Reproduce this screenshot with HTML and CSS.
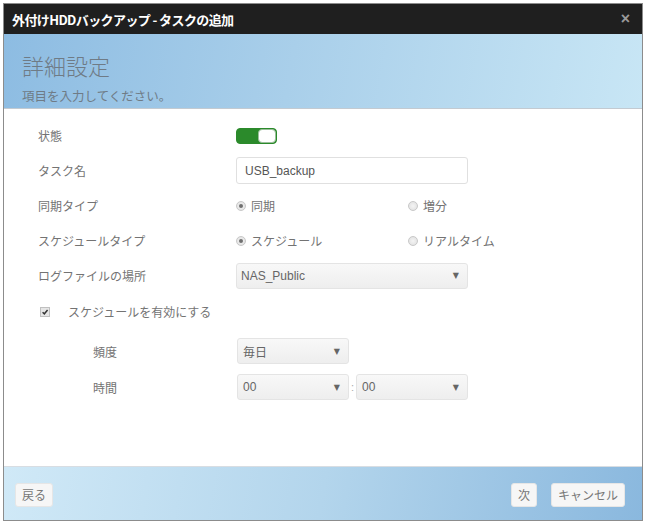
FILE: index.html
```html
<!DOCTYPE html>
<html lang="ja">
<head>
<meta charset="utf-8">
<title>外付けHDDバックアップ - タスクの追加</title>
<link rel="stylesheet" href="styles.css">
</head>
<body>
<div class="dialog">
  <div class="titlebar">
    <span class="title">外付けHDDバックアップ - タスクの追加</span>
    <span class="close">×</span>
  </div>
  <div class="banner">
    <div class="banner-title">詳細設定</div>
    <div class="banner-sub">項目を入力してください。</div>
  </div>
  <div class="content">
    <div class="row">
      <div class="label">状態</div>
      <div class="control"><span class="toggle"><span class="knob"></span></span></div>
    </div>
    <div class="row">
      <div class="label">タスク名</div>
      <div class="control"><div class="input">USB_backup</div></div>
    </div>
    <div class="row">
      <div class="label">同期タイプ</div>
      <div class="control radios">
        <span class="radio-opt"><span class="radio checked"></span>同期</span>
        <span class="radio-opt"><span class="radio"></span>増分</span>
      </div>
    </div>
    <div class="row">
      <div class="label">スケジュールタイプ</div>
      <div class="control radios">
        <span class="radio-opt"><span class="radio checked"></span>スケジュール</span>
        <span class="radio-opt"><span class="radio"></span>リアルタイム</span>
      </div>
    </div>
    <div class="row">
      <div class="label">ログファイルの場所</div>
      <div class="control"><div class="select wide"><span class="latin">NAS_Public</span><span class="arrow">▼</span></div></div>
    </div>
    <div class="row check-row">
      <span class="checkbox"><svg viewBox="0 0 10 10" width="10" height="10"><path d="M2 5.2 L4.2 7.3 L8.2 2.6" fill="none" stroke="#333" stroke-width="1.8"/></svg></span>
      <span class="check-label">スケジュールを有効にする</span>
    </div>
    <div class="sub">
      <div class="row sub-row">
        <div class="label sub-label">頻度</div>
        <div class="control"><div class="select short">毎日<span class="arrow">▼</span></div></div>
      </div>
      <div class="row sub-row">
        <div class="label sub-label">時間</div>
        <div class="control time">
          <div class="select short"><span class="latin">00</span><span class="arrow">▼</span></div>
          <span class="colon">:</span>
          <div class="select short"><span class="latin">00</span><span class="arrow">▼</span></div>
        </div>
      </div>
    </div>
  </div>
  <div class="footer">
    <span class="btn">戻る</span>
    <span class="spacer"></span>
    <span class="btn">次</span>
    <span class="btn">キャンセル</span>
  </div>
</div>
</body>
</html>
```
FILE: styles.css
```css
* { box-sizing: border-box; }
html, body { margin: 0; padding: 0; background: #ffffff; }
body {
  font-family: "Noto Sans CJK JP", "Liberation Sans", sans-serif;
  width: 645px;
  height: 527px;
  overflow: hidden;
}
.dialog {
  margin: 3px 0 0 3px;
  width: 640px;
  height: 518px;
  border: 1px solid #8c8c8c;
  display: flex;
  flex-direction: column;
  background: #fff;
}
.titlebar {
  height: 30px;
  background: #1f1f1f;
  display: flex;
  align-items: center;
  justify-content: space-between;
  padding: 0 12px 0 8px;
  flex: none;
}
.title {
  color: #fff;
  font-weight: 700;
  font-size: 13px;
  letter-spacing: -0.6px;
}
.close {
  color: #9a9a9a;
  font-family: "Liberation Sans", sans-serif;
  font-size: 16px;
  font-weight: 700;
}
.banner {
  height: 75px;
  flex: none;
  background: linear-gradient(100deg, #8dbce2 0%, #a9cfea 45%, #c8e6f5 100%);
  border-bottom: 1px solid #c3cad1;
  padding: 17px 0 0 18px;
}
.banner-title {
  font-size: 22px;
  line-height: 28px;
  color: #6f7b86;
  font-weight: 300;
}
.banner-sub {
  margin-top: 9px;
  font-size: 12.5px;
  line-height: 16px;
  color: #6f7b86;
}
.content {
  flex: 1;
  padding: 9px 0 0 34px;
}
.row {
  display: flex;
  align-items: center;
  height: 35px;
}
.label {
  width: 198px;
  font-size: 12px;
  color: #737373;
  flex: none;
}
.control {
  display: flex;
  align-items: center;
}
.toggle {
  width: 41px;
  height: 16px;
  border-radius: 4px;
  background: #2b8a2b;
  border: 1px solid #2b8a2b;
  display: flex;
  justify-content: flex-end;
}
.knob {
  width: 18px;
  height: 14px;
  background: #fff;
  border-radius: 4px;
  border: 1px solid #9bbf9b;
}
.input {
  width: 232px;
  height: 27px;
  border: 1px solid #e0e0e0;
  border-radius: 3px;
  padding-left: 8px;
  display: flex;
  align-items: center;
  font-family: "Liberation Sans", sans-serif;
  font-size: 12px;
  color: #555;
}
.radios { width: 260px; }
.radio-opt {
  display: flex;
  align-items: center;
  width: 172px;
  font-size: 12px;
  color: #737373;
}
.radio-opt + .radio-opt { width: auto; }
.radio {
  width: 10px;
  height: 10px;
  border-radius: 50%;
  border: 1px solid #c8c8c8;
  background: radial-gradient(circle, #f4f4f4 0%, #dedede 100%);
  margin-right: 5px;
  position: relative;
  flex: none;
}
.radio.checked::after {
  content: "";
  position: absolute;
  left: 2px;
  top: 2px;
  width: 4px;
  height: 4px;
  border-radius: 50%;
  background: #707070;
}
.select {
  height: 26px;
  border: 1px solid #e4e4e4;
  border-radius: 3px;
  background: linear-gradient(#f8f8f8, #eeeeee);
  display: flex;
  align-items: center;
  justify-content: space-between;
  padding: 0 8px 0 5px;
  font-size: 12px;
  color: #666;
}
.select.wide { width: 232px; padding-left: 4px; }
.select.short { width: 112px; padding-left: 5px; }
.latin { font-family: "Liberation Sans", sans-serif; font-size: 12px; color: #666; }
.arrow { font-size: 8px; color: #666; font-family: "DejaVu Sans", sans-serif; }
.check-row { padding-left: 2px; height: 37px; }
.checkbox {
  width: 10px;
  height: 10px;
  border: 1px solid #c0c0c0;
  background: #e6e6e6;
  display: flex;
  align-items: center;
  justify-content: center;
  margin-right: 18px;
}
.checkbox svg { display: block; }
.check-label { font-size: 12px; color: #737373; }
.sub { margin-top: 3px; }
.sub-row { height: 36px; }
.sub-label { padding-left: 55px; width: 199px; }
.colon { width: 7px; text-align: center; font-size: 11px; color: #aaa; font-family: "Liberation Sans", sans-serif; }
.footer {
  height: 54px;
  flex: none;
  border-top: 1px solid #d8dde2;
  background: linear-gradient(100deg, #d0e9f7 0%, #b3d5ec 50%, #8ab8de 100%);
  display: flex;
  align-items: center;
  padding: 2px 17px 0 11px;
  gap: 14px;
}
.spacer { flex: 1; }
.btn {
  height: 24px;
  padding: 0 6px;
  border: 1px solid #e6e6e6;
  border-radius: 3px;
  background: #f6f6f6;
  font-size: 12px;
  color: #777;
  display: flex;
  align-items: center;
}
```
